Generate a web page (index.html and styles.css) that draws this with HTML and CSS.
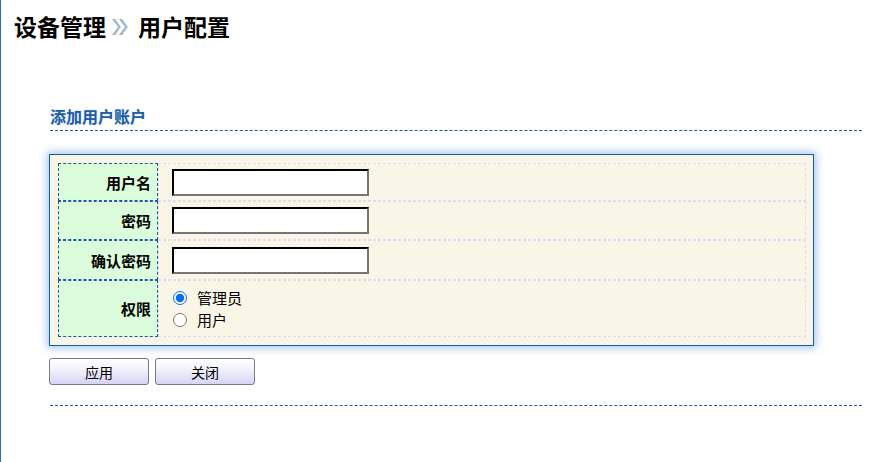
FILE: index.html
```html
<!DOCTYPE html>
<html lang="zh-CN">
<head>
    <meta charset="UTF-8">
    <title>用户配置</title>
    <link rel="stylesheet" href="styles.css">
</head>
<body>
    <div class="page">
        <!-- 页面标题 -->
        <h1 class="crumb">
            <span>设备管理</span>
            <svg class="sep" width="18" height="18" viewBox="0 0 18 18">
                <defs>
                    <linearGradient id="g" x1="0" y1="0" x2="1" y2="0">
                        <stop offset="0" stop-color="#a9a9a9"/>
                        <stop offset="1" stop-color="#9cc3ef"/>
                    </linearGradient>
                </defs>
                <path d="M1 1 L7 9 L1 17 L4 17 L10 9 L4 1 Z" fill="url(#g)"/>
                <path d="M8 1 L14 9 L8 17 L11 17 L17 9 L11 1 Z" fill="url(#g)"/>
            </svg>
            <span>用户配置</span>
        </h1>

        <div class="content">
            <h2 class="sec-title">添加用户账户</h2>

            <div class="box">
                <table class="form">
                    <tr class="r1">
                        <td class="lab">用户名</td>
                        <td class="val"><input type="text" class="txt"></td>
                    </tr>
                    <tr class="r2">
                        <td class="lab">密码</td>
                        <td class="val"><input type="password" class="txt"></td>
                    </tr>
                    <tr class="r3">
                        <td class="lab">确认密码</td>
                        <td class="val"><input type="password" class="txt"></td>
                    </tr>
                    <tr class="r4">
                        <td class="lab">权限</td>
                        <td class="val">
                            <label class="rad"><input type="radio" name="role" checked> 管理员</label>
                            <label class="rad"><input type="radio" name="role"> 用户</label>
                        </td>
                    </tr>
                </table>
            </div>

            <div class="btns">
                <button class="btn">应用</button>
                <button class="btn">关闭</button>
            </div>

            <div class="endline"></div>
        </div>
    </div>
</body>
</html>
```

FILE: styles.css
```css
*{
    margin: 0;
    padding: 0;
    box-sizing: border-box;
}
html, body{
    height: 100%;
    background: #fff;
}
body{
    font-family: "Noto Sans CJK SC", "Liberation Sans", sans-serif;
    font-size: 14px;
    color: #000;
}
.page{
    min-height: 100%;
    border-left: 1px solid #2f6aa6;
}

/* 标题 */
.crumb{
    display: flex;
    align-items: center;
    padding: 10px 0 0 13px;
    height: 42px;
    font-size: 23px;
    line-height: 30px;
    font-weight: bold;
}
.crumb .sep{
    margin: 2px 9px 0 5px;
}

.content{
    padding: 64px 22px 0 48px;
}

/* 小标题 */
.sec-title{
    margin-left: 1px;
    font-size: 16px;
    line-height: 20px;
    font-weight: bold;
    color: #1d5ca5;
    text-shadow: 0 0 2px #c7dcf4;
    padding-bottom: 4px;
    border-bottom: 1px dashed #1d5ca5;
}

/* 表单框 */
.box{
    width: 765px;
    margin-top: 23px;
    padding: 8px 7px 8px 8px;
    border: 1px solid #0b5fad;
    background: #f9f6e7;
    box-shadow: 0 0 8px 2px rgba(60, 130, 210, 0.45);
}
.form{
    width: 100%;
    border-collapse: separate;
    border-spacing: 0;
}
.form td{
    vertical-align: middle;
}
.lab{
    width: 100px;
    padding-right: 6px;
    text-align: right;
    font-size: 15px;
    font-weight: bold;
    background: #dcfddc;
    border: 1px dashed #1d5ca5;
}
.val{
    padding-left: 13px;
    border: 1px dashed #dedcf6;
}
.r1 td{
    height: 38px;
}
.r2 td{
    height: 39px;
}
.r3 td{
    height: 40px;
}
.r4 td{
    height: 57px;
}
.txt{
    display: block;
    width: 197px;
    height: 27px;
    border: 2px inset #767676;
    border-color: #2b2b2b #767676 #767676 #2b2b2b;
    background: #fff;
}
.rad{
    display: flex;
    align-items: center;
    height: 22px;
    gap: 10px;
    font-size: 15px;
}
.rad input{
    width: 14px;
    height: 14px;
    margin-left: 1px;
    accent-color: #0a6cf0;
}

/* 按钮 */
.btns{
    display: flex;
    gap: 6px;
    margin-top: 12px;
}
.btn{
    width: 100px;
    height: 27px;
    font-family: inherit;
    font-size: 14px;
    color: #000;
    border: 1px solid #7a7a7a;
    border-radius: 3px;
    background: linear-gradient(#ffffff, #f2f2fb 40%, #d5d5f5);
}

.endline{
    margin: 20px 0 0 1px;
    border-top: 1px dashed #1d5ca5;
}
```
